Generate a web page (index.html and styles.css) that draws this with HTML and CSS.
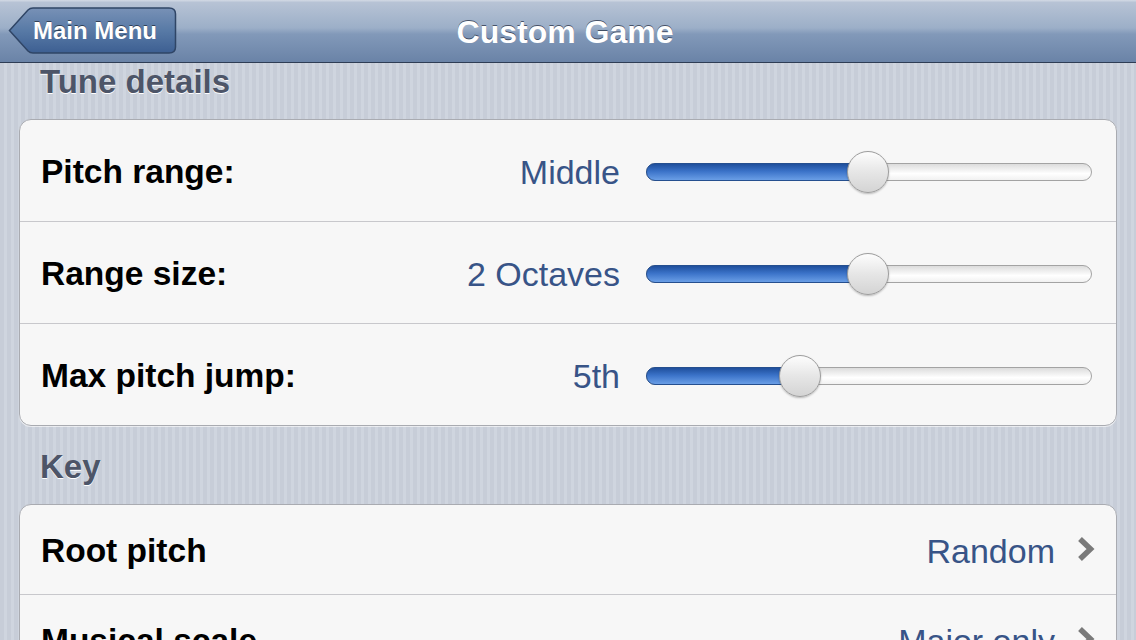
FILE: index.html
```html
<!DOCTYPE html>
<html lang="en">
<head>
<meta charset="UTF-8">
<meta name="viewport" content="width=device-width, initial-scale=1.0">
<title>Custom Game</title>
<link rel="stylesheet" href="styles.css">
</head>
<body>

<header class="navbar">
  <a class="back-btn" href="#">
    <svg class="back-shape" width="169" height="47" viewBox="0 0 169 47">
      <defs>
        <linearGradient id="backGrad" x1="0" y1="0" x2="0" y2="1">
          <stop offset="0" stop-color="#7891b6"/>
          <stop offset="0.5" stop-color="#587aa6"/>
          <stop offset="1" stop-color="#3d5f92"/>
        </linearGradient>
      </defs>
      <path d="M1.5 23.5 L20 3 Q22 1 25 1 L161 1 Q167.5 1 167.5 7 L167.5 40 Q167.5 46 161 46 L25 46 Q22 46 20 44 Z" fill="url(#backGrad)" stroke="#2f4566" stroke-width="1.5"/>
    </svg>
    <span class="back-label">Main Menu</span>
  </a>
  <h1 class="nav-title">Custom Game</h1>
  <div class="nav-spacer"></div>
</header>

<main class="content">
  <!-- Tune details -->
  <h2 class="group-title first">Tune details</h2>
  <section class="group">
    <div class="row slider-row">
      <span class="row-label">Pitch range:</span>
      <span class="row-value">Middle</span>
      <div class="slider" style="--pos: 222px">
        <div class="slider-fill"></div>
        <div class="slider-thumb"></div>
      </div>
    </div>
    <div class="row slider-row">
      <span class="row-label">Range size:</span>
      <span class="row-value">2 Octaves</span>
      <div class="slider" style="--pos: 222px">
        <div class="slider-fill"></div>
        <div class="slider-thumb"></div>
      </div>
    </div>
    <div class="row slider-row">
      <span class="row-label">Max pitch jump:</span>
      <span class="row-value">5th</span>
      <div class="slider" style="--pos: 154px">
        <div class="slider-fill"></div>
        <div class="slider-thumb"></div>
      </div>
    </div>
  </section>

  <!-- Key -->
  <h2 class="group-title">Key</h2>
  <section class="group">
    <div class="row link-row">
      <span class="row-label">Root pitch</span>
      <span class="row-value">Random</span>
      <svg class="chevron" width="18" height="26" viewBox="0 0 18 26">
        <polyline points="3,3 13.5,13 3,23" fill="none" stroke="#7a7a7a" stroke-width="5.5"/>
      </svg>
    </div>
    <div class="row link-row">
      <span class="row-label">Musical scale</span>
      <span class="row-value">Major only</span>
      <svg class="chevron" width="18" height="26" viewBox="0 0 18 26">
        <polyline points="3,3 13.5,13 3,23" fill="none" stroke="#7a7a7a" stroke-width="5.5"/>
      </svg>
    </div>
  </section>
</main>

</body>
</html>
```

FILE: styles.css
```css
/* General styles */
html, body {
  margin: 0;
  padding: 0;
  height: 100%;
  overflow: hidden;
}

body {
  font-family: 'Liberation Sans', Arial, Helvetica, sans-serif;
  background-color: #cad0da;
  background-image: repeating-linear-gradient(90deg, #c7cdd8 0, #c7cdd8 4px, #cfd5df 4px, #cfd5df 7px);
}

/* Navigation bar */
.navbar {
  height: 63px;
  box-sizing: border-box;
  display: grid;
  grid-template-columns: 1fr auto 1fr;
  align-items: center;
  padding: 0 8px;
  background: linear-gradient(#d3dae5 0, #b7c3d5 4%, #9cafc8 45%, #8299b9 55%, #6a83a7 100%);
  border-bottom: 1px solid #2e3d55;
}

.back-btn {
  position: relative;
  width: 169px;
  height: 47px;
  display: flex;
  align-items: center;
  text-decoration: none;
  justify-self: start;
  margin-top: -1px;
}

.back-shape {
  position: absolute;
  left: 0;
  top: 0;
}

.back-label {
  position: relative;
  padding-left: 25px;
  color: #fff;
  font-weight: bold;
  font-size: 24px;
  text-shadow: 0 -1px 0 rgba(0, 0, 0, 0.5);
}

.nav-title {
  margin: 3px 0 0 -6px;
  color: #fff;
  font-size: 32px;
  font-weight: bold;
  text-shadow: 0 -1px 0 rgba(30, 40, 60, 0.7);
}

/* Content */
.content {
  padding: 0 19px;
}

.group-title {
  margin: 0;
  height: 78px;
  box-sizing: border-box;
  padding: 22px 0 0 21px;
  font-size: 33px;
  line-height: 38px;
  color: #4d5568;
  text-shadow: 0 1px 0 #fff;
}

.group-title.first {
  height: 56px;
  padding-top: 0;
}

.group {
  background-color: #f7f7f7;
  border: 1px solid #a9abb1;
  border-radius: 12px;
  box-shadow: 0 1px 0 rgba(255, 255, 255, 0.6);
  overflow: hidden;
}

.row {
  display: flex;
  align-items: center;
  padding: 2px 24px 0 21px;
  box-sizing: border-box;
  border-top: 1px solid #c8c8cc;
  font-size: 33.5px;
  line-height: 38px;
}

.row:first-child {
  border-top: none;
}

.slider-row {
  height: 102px;
}

.slider-row:first-child {
  height: 101px;
}

.link-row {
  height: 90px;
  padding-right: 21px;
}

.link-row:first-child {
  height: 89px;
}

.row-label {
  font-weight: bold;
  color: #000;
  flex: 1;
}

.row-value {
  color: #385487;
  font-size: 34px;
}

/* Slider */
.slider {
  position: relative;
  width: 446px;
  height: 18px;
  margin-left: 26px;
  box-sizing: border-box;
  border: 1px solid #a3a3a3;
  border-radius: 9px;
  background: linear-gradient(#dcdcdc, #ffffff 60%, #f1f1f1);
}

.slider-fill {
  position: absolute;
  left: -1px;
  top: -1px;
  bottom: -1px;
  width: var(--pos);
  box-sizing: border-box;
  border: 1px solid #254f8f;
  border-radius: 9px 0 0 9px;
  background: linear-gradient(#1f4f9c, #3a72c8 45%, #6a9ee6 100%);
}

.slider-thumb {
  position: absolute;
  top: -13px;
  left: calc(var(--pos) - 22px);
  width: 42px;
  height: 42px;
  box-sizing: border-box;
  border-radius: 50%;
  border: 1px solid #9d9d9d;
  background: linear-gradient(#fdfdfd, #e6e6e6 50%, #d4d4d4);
  box-shadow: 0 1px 2px rgba(0, 0, 0, 0.25);
}

/* Disclosure chevron */
.chevron {
  margin-left: 22px;
  margin-top: -4px;
}
```
